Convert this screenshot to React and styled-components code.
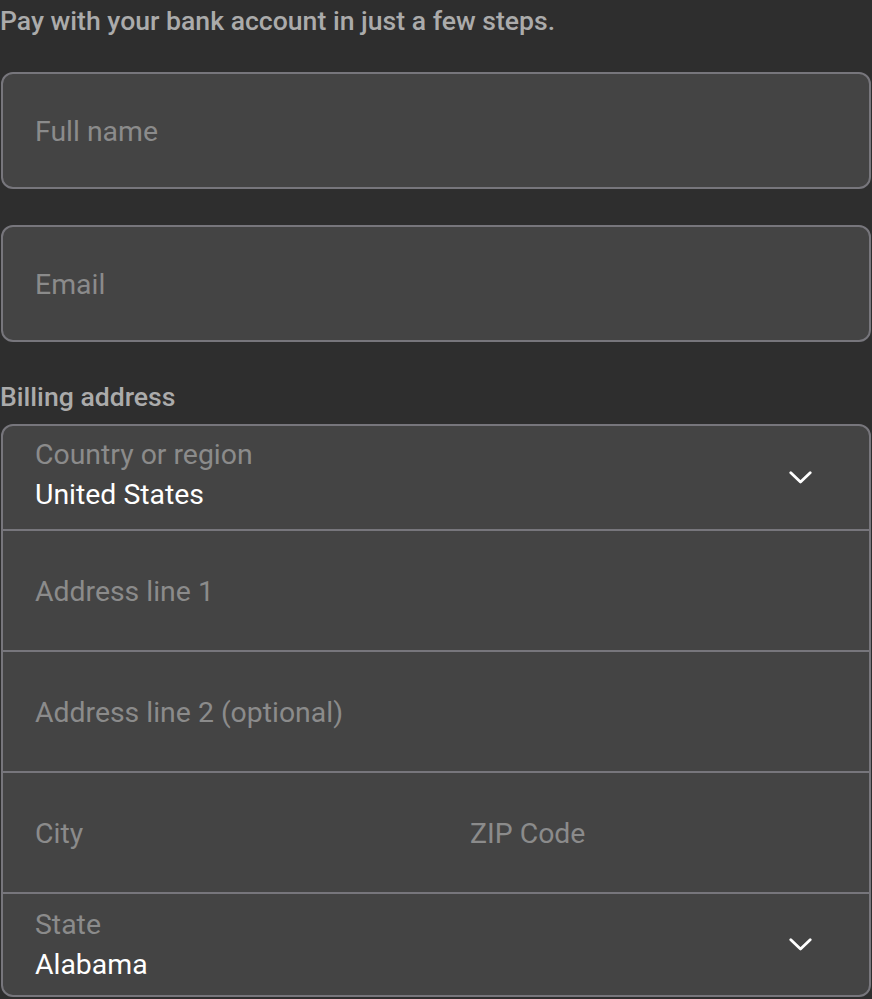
import React from "react"
import styled, { createGlobalStyle } from "styled-components"

const colors = {
  page: "#2e2e2e",
  field: "#444444",
  border: "#77767c",
  muted: "#8b8b8b",
  heading: "#ababab",
  white: "#ffffff",
}

const GlobalStyle = createGlobalStyle`
  html, body {
    margin: 0;
    padding: 0;
    background: ${colors.page};
  }
  body {
    font-family: Roboto, "Noto Sans", sans-serif;
    -webkit-font-smoothing: antialiased;
  }
  * {
    box-sizing: border-box;
  }
`

const Page = styled.div`
  width: 872px;
  min-height: 999px;
  background: ${colors.page};
  padding: 0 1px 0 1px;
`

const Heading = styled.p`
  margin: 0 0 30px -1px;
  font-size: 26.6px;
  font-weight: 500;
  line-height: 42px;
  color: ${colors.heading};
`

const TextField = styled.div`
  display: flex;
  align-items: center;
  height: 117px;
  padding: 2px 32px 0;
  margin-bottom: 36px;
  background: ${colors.field};
  border: 2px solid ${colors.border};
  border-radius: 12px;
`

const Placeholder = styled.span`
  font-size: 28.4px;
  color: ${colors.muted};
`

const SectionLabel = styled.p`
  margin: -2px 0 6px -1px;
  font-size: 26.6px;
  font-weight: 500;
  line-height: 42px;
  color: ${colors.heading};
`

const Group = styled.div`
  background: ${colors.field};
  border: 2px solid ${colors.border};
  border-radius: 12px;
  overflow: hidden;
`

const Row = styled.div`
  display: ${props => (props.split ? "grid" : "flex")};
  grid-template-columns: 1fr 1fr;
  align-items: center;
  height: ${props => (props.select ? "103px" : "121px")};
  border-top: ${props => (props.first ? "none" : `2px solid ${colors.border}`)};
`

const Cell = styled.div`
  display: flex;
  align-items: center;
  flex: 1;
  padding-left: ${props => props.indent || 32}px;
  padding-top: 2px;
`

const SelectText = styled.div`
  display: flex;
  flex-direction: column;
  flex: 1;
  padding-left: 32px;
  margin-top: ${props => props.shift}px;
`

const SelectLabel = styled.span`
  font-size: 28.4px;
  line-height: 40px;
  color: ${colors.muted};
`

const SelectValue = styled.span`
  font-size: 28.4px;
  line-height: 40px;
  color: ${colors.white};
`

const Chevron = styled.svg`
  width: 23px;
  height: 13px;
  margin-right: 57px;
  flex-shrink: 0;
`

const ChevronIcon = () => (
  <Chevron viewBox="0 0 23 13" fill="none">
    <polyline
      points="1.8,1.8 11.5,11 21.2,1.8"
      stroke={colors.white}
      strokeWidth="2.8"
      strokeLinecap="round"
      strokeLinejoin="round"
    />
  </Chevron>
)

const SelectRow = ({ label, value, first, shift }) => (
  <Row select first={first}>
    <SelectText shift={shift}>
      <SelectLabel>{label}</SelectLabel>
      <SelectValue>{value}</SelectValue>
    </SelectText>
    <ChevronIcon />
  </Row>
)

const App = () => {
  return (
    <>
      <GlobalStyle />
      <Page>
        <Heading>Pay with your bank account in just a few steps.</Heading>
        <TextField>
          <Placeholder>Full name</Placeholder>
        </TextField>
        <TextField>
          <Placeholder>Email</Placeholder>
        </TextField>

        <SectionLabel>Billing address</SectionLabel>
        <Group>
          <SelectRow first shift={-6} label="Country or region" value="United States" />
          <Row>
            <Cell>
              <Placeholder>Address line 1</Placeholder>
            </Cell>
          </Row>
          <Row>
            <Cell>
              <Placeholder>Address line 2 (optional)</Placeholder>
            </Cell>
          </Row>
          <Row split>
            <Cell>
              <Placeholder>City</Placeholder>
            </Cell>
            <Cell indent={34}>
              <Placeholder>ZIP Code</Placeholder>
            </Cell>
          </Row>
          <SelectRow shift={0} label="State" value="Alabama" />
        </Group>
      </Page>
    </>
  )
}

export default App
